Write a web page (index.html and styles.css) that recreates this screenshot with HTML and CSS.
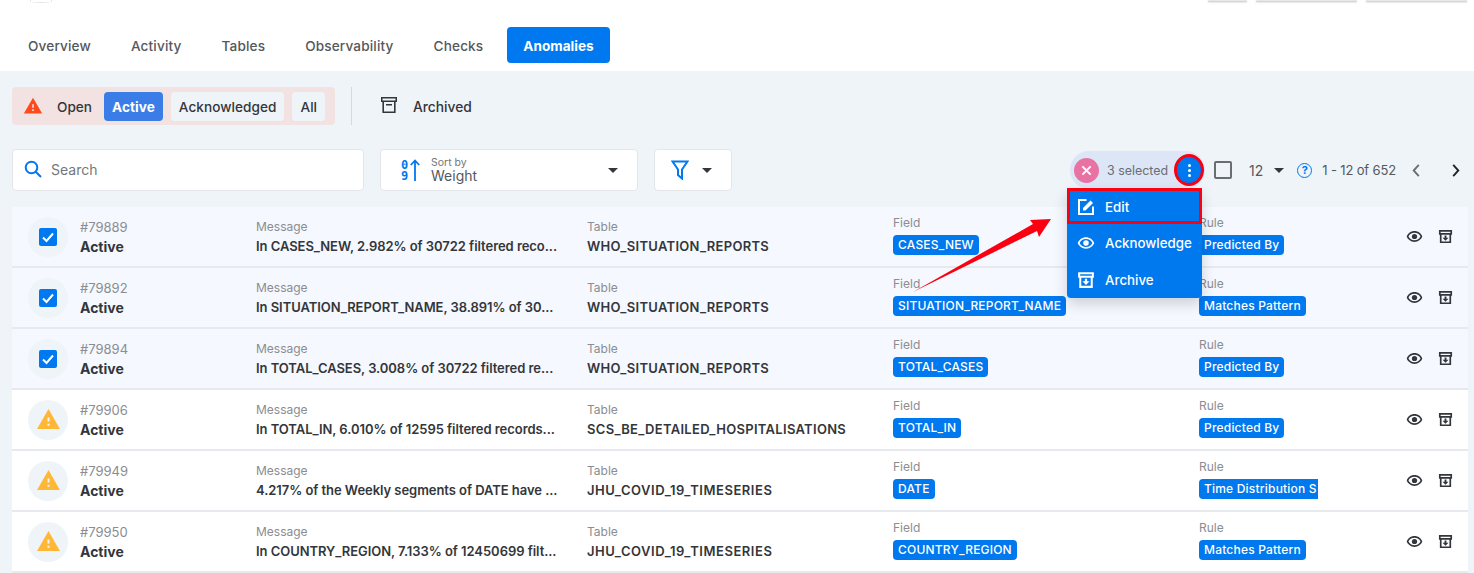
FILE: index.html
```html
<!DOCTYPE html>
<html lang="en">
<head>
  <meta charset="UTF-8" />
  <title>Anomalies</title>
  <link rel="stylesheet" href="styles.css">
</head>
<body>
  <svg class="defs" width="0" height="0">
    <symbol id="i-warn" viewBox="0 0 24 24"><path d="M1 21h22L12 2 1 21zm12-3h-2v-2h2v2zm0-4h-2v-4h2v4z"/></symbol>
    <symbol id="i-eye" viewBox="0 0 24 24"><path d="M12 6.8c3.79 0 7 1.900 8.500 5.200-1.500 3.300-4.700 5.200-8.500 5.200S5 15.300 3.500 12C5 8.700 8.210 6.800 12 6.800m0-2.400C7 4.400 2.730 7.550 1 12c1.730 4.450 6 7.600 11 7.600s9.270-3.150 11-7.600c-1.730-4.450-6-7.600-11-7.600z"/><circle cx="12" cy="12" r="3.700"/></symbol>
    <symbol id="i-unarchive" viewBox="0 0 16 16"><path fill-rule="evenodd" d="M1 1h14v5h-1V15H2V6H1zM2.800 2.800v1.400h10.400V2.800zM3.800 6v7.200h8.400V6z"/><path d="M7 6.800h2v2.400h2.200L8 12.400 4.800 9.200H7z"/></symbol>
  </svg>

  <header class="topbar">
    <div class="top-stubs">
      <span class="logo-stub"></span>
      <span class="stub stub-a"></span>
      <span class="stub stub-b"></span>
      <span class="stub stub-b"></span>
    </div>
    <nav class="tabs">
      <a class="tab">Overview</a>
      <a class="tab">Activity</a>
      <a class="tab">Tables</a>
      <a class="tab">Observability</a>
      <a class="tab">Checks</a>
      <a class="tab tab-on">Anomalies</a>
    </nav>
  </header>

  <main class="content">
    <div class="status-row">
      <div class="status-group">
        <svg class="status-warn"><use href="#i-warn"/></svg>
        <span class="status-label">Open</span>
        <span class="pill pill-on">Active</span>
        <span class="pill">Acknowledged</span>
        <span class="pill">All</span>
      </div>
      <span class="divider"></span>
      <svg class="archive-icon" viewBox="0 0 16 16"><path fill-rule="evenodd" d="M0 0h16v5h-1.400v11H1.400V5H0zM1.500 1.500V3.500h13V1.500zM3 5v9.500h10V5z"/><rect x="5" y="7" width="6" height="1.500"/></svg>
      <span class="archived">Archived</span>
    </div>

    <div class="tools-row">
      <label class="search">
        <svg class="search-icon" viewBox="0 0 18 18"><circle cx="7.500" cy="7.500" r="5.800"/><path d="M11.700 11.700 17 17"/></svg>
        <span>Search</span>
      </label>
      <div class="sort">
        <svg class="sort-icon" viewBox="0 0 18 24">
          <text x="0" y="10.500">0</text>
          <text x="0" y="22">9</text>
          <path d="M14 23V3M9.800 7 14 2.500 18.200 7"/>
        </svg>
        <div class="sort-text">
          <small>Sort by</small>
          <span>Weight</span>
        </div>
        <i class="caret"></i>
      </div>
      <div class="filter">
        <svg class="filter-icon" viewBox="0 0 18 20"><path d="M1.500 1.500h15L11 9.500v9l-4-3.500V9.500z"/></svg>
        <i class="caret"></i>
      </div>

      <div class="bulk">
        <div class="selected">
          <span class="clear">
            <svg viewBox="0 0 12 12"><path d="M1.500 1.500l9 9M10.500 1.500l-9 9"/></svg>
          </span>
          <span class="selected-text">3 selected</span>
          <span class="kebab"><b></b><b></b><b></b></span>
        </div>
        <ul class="menu">
          <li class="menu-item menu-edit">
            <svg viewBox="0 0 18 18"><path class="stroke" d="M9.500 2H2v14h14V8.500"/><path d="M6 12.500V10l7.500-7.500 2.500 2.500L8.500 12.500z"/></svg>
            Edit
          </li>
          <li class="menu-item">
            <svg viewBox="0 0 24 24"><use href="#i-eye"/></svg>
            Acknowledge
          </li>
          <li class="menu-item">
            <svg viewBox="0 0 16 16"><use href="#i-unarchive"/></svg>
            Archive
          </li>
        </ul>
        <span class="check-all"></span>
        <span class="per-page">12</span>
        <i class="caret"></i>
        <span class="help">?</span>
        <span class="range">1 - 12 of 652</span>
        <svg class="chev chev-prev" viewBox="0 0 8 14"><path d="M7 1 1.500 7 7 13"/></svg>
        <svg class="chev chev-next" viewBox="0 0 8 14"><path d="M1 1l5.500 6L1 13"/></svg>
      </div>
    </div>

    <section class="rows">
      <article class="row row-sel">
        <div class="state"><span class="tick"><svg viewBox="0 0 18 18"><path d="M4 9.500 7.500 13 14 5.500"/></svg></span></div>
        <div class="ident"><small>#79889</small><strong>Active</strong></div>
        <div class="cell"><small>Message</small><strong>In CASES_NEW, 2.982% of 30722 filtered reco...</strong></div>
        <div class="cell cell-table"><small>Table</small><strong>WHO_SITUATION_REPORTS</strong></div>
        <div class="cell cell-tag"><small>Field</small><span class="tag">CASES_NEW</span></div>
        <div class="cell cell-tag"><small>Rule</small><span class="tag">Predicted By</span></div>
        <div class="actions"><svg class="act-eye"><use href="#i-eye"/></svg><svg class="act-box"><use href="#i-unarchive"/></svg></div>
      </article>
      <article class="row row-sel">
        <div class="state"><span class="tick"><svg viewBox="0 0 18 18"><path d="M4 9.500 7.500 13 14 5.500"/></svg></span></div>
        <div class="ident"><small>#79892</small><strong>Active</strong></div>
        <div class="cell"><small>Message</small><strong>In SITUATION_REPORT_NAME, 38.891% of 30...</strong></div>
        <div class="cell cell-table"><small>Table</small><strong>WHO_SITUATION_REPORTS</strong></div>
        <div class="cell cell-tag"><small>Field</small><span class="tag">SITUATION_REPORT_NAME</span></div>
        <div class="cell cell-tag"><small>Rule</small><span class="tag">Matches Pattern</span></div>
        <div class="actions"><svg class="act-eye"><use href="#i-eye"/></svg><svg class="act-box"><use href="#i-unarchive"/></svg></div>
      </article>
      <article class="row row-sel">
        <div class="state"><span class="tick"><svg viewBox="0 0 18 18"><path d="M4 9.500 7.500 13 14 5.500"/></svg></span></div>
        <div class="ident"><small>#79894</small><strong>Active</strong></div>
        <div class="cell"><small>Message</small><strong>In TOTAL_CASES, 3.008% of 30722 filtered re...</strong></div>
        <div class="cell cell-table"><small>Table</small><strong>WHO_SITUATION_REPORTS</strong></div>
        <div class="cell cell-tag"><small>Field</small><span class="tag">TOTAL_CASES</span></div>
        <div class="cell cell-tag"><small>Rule</small><span class="tag">Predicted By</span></div>
        <div class="actions"><svg class="act-eye"><use href="#i-eye"/></svg><svg class="act-box"><use href="#i-unarchive"/></svg></div>
      </article>
      <article class="row">
        <div class="state"><svg class="warn"><use href="#i-warn"/></svg></div>
        <div class="ident"><small>#79906</small><strong>Active</strong></div>
        <div class="cell"><small>Message</small><strong>In TOTAL_IN, 6.010% of 12595 filtered records...</strong></div>
        <div class="cell cell-table"><small>Table</small><strong>SCS_BE_DETAILED_HOSPITALISATIONS</strong></div>
        <div class="cell cell-tag"><small>Field</small><span class="tag">TOTAL_IN</span></div>
        <div class="cell cell-tag"><small>Rule</small><span class="tag">Predicted By</span></div>
        <div class="actions"><svg class="act-eye"><use href="#i-eye"/></svg><svg class="act-box"><use href="#i-unarchive"/></svg></div>
      </article>
      <article class="row">
        <div class="state"><svg class="warn"><use href="#i-warn"/></svg></div>
        <div class="ident"><small>#79949</small><strong>Active</strong></div>
        <div class="cell"><small>Message</small><strong>4.217% of the Weekly segments of DATE have ...</strong></div>
        <div class="cell cell-table cell-jhu"><small>Table</small><strong>JHU_COVID_19_TIMESERIES</strong></div>
        <div class="cell cell-tag"><small>Field</small><span class="tag">DATE</span></div>
        <div class="cell cell-tag"><small>Rule</small><span class="tag tag-cut">Time Distribution S</span></div>
        <div class="actions"><svg class="act-eye"><use href="#i-eye"/></svg><svg class="act-box"><use href="#i-unarchive"/></svg></div>
      </article>
      <article class="row">
        <div class="state"><svg class="warn"><use href="#i-warn"/></svg></div>
        <div class="ident"><small>#79950</small><strong>Active</strong></div>
        <div class="cell"><small>Message</small><strong>In COUNTRY_REGION, 7.133% of 12450699 filt...</strong></div>
        <div class="cell cell-table cell-jhu"><small>Table</small><strong>JHU_COVID_19_TIMESERIES</strong></div>
        <div class="cell cell-tag"><small>Field</small><span class="tag">COUNTRY_REGION</span></div>
        <div class="cell cell-tag"><small>Rule</small><span class="tag">Matches Pattern</span></div>
        <div class="actions"><svg class="act-eye"><use href="#i-eye"/></svg><svg class="act-box"><use href="#i-unarchive"/></svg></div>
      </article>
    </section>
  </main>

  <svg class="callout" viewBox="0 0 1474 573"><polygon points="913,292 1033,224 1030,220 1051,219 1039,237 1037,231"/></svg>
</body>
</html>
```

FILE: styles.css
```css
* {
  box-sizing: border-box;
}
html, body {
  height: 573px;
  overflow: hidden;
}
body {
  font-family: 'Inter', 'Noto Sans', sans-serif;
  margin: 0;
  color: #33363a;
  background-color: #eff4f9;
  position: relative;
}
.defs {
  position: absolute;
}
small {
  font-size: 12px;
  font-weight: 400;
}

/* top bar */
.topbar {
  height: 71px;
  background-color: white;
  padding-left: 12px;
}
.top-stubs {
  height: 27px;
  display: flex;
  align-items: flex-start;
  padding-right: 7px;
  gap: 9px;
}
.logo-stub {
  width: 22px;
  height: 3px;
  margin-left: 18px;
  margin-right: auto;
  border: 1px solid #e3e5e8;
  border-top: none;
  border-radius: 0 0 50% 50%;
}
.stub {
  height: 1px;
  background-color: #e8e8e8;
  box-shadow: 0 1px 2px rgba(0,0,0,0.35);
}
.stub-a {
  width: 39px;
}
.stub-b {
  width: 101px;
}
.tabs {
  display: flex;
  gap: 8px;
}
.tab {
  height: 36px;
  padding: 1px 16px 0;
  display: flex;
  align-items: center;
  font-size: 13.600px;
  font-weight: 500;
  letter-spacing: 0.150px;
  color: #55585c;
  border-radius: 4px;
}
.tab-on {
  background-color: #0078f0;
  color: white;
  font-weight: 700;
  letter-spacing: 0;
}

/* main */
.content {
  padding: 16px 6px 0 12px;
}
.status-row {
  height: 38px;
  display: flex;
  align-items: center;
}
.status-group {
  height: 38px;
  width: 323px;
  display: flex;
  align-items: center;
  gap: 8px;
  padding-left: 11px;
  background-color: #f2e3e2;
  border-radius: 4px;
}
.status-warn {
  width: 20px;
  height: 20px;
  fill: #ff4a1c;
}
.status-label {
  margin-left: 6px;
  margin-right: 4px;
  padding-top: 1px;
  font-size: 13.600px;
  font-weight: 500;
}
.pill {
  height: 29px;
  padding: 1px 8px 0;
  display: flex;
  align-items: center;
  font-size: 13.600px;
  font-weight: 500;
  letter-spacing: 0.050px;
  background-color: #eff4f9;
  border-radius: 4px;
}
.pill-on {
  background-color: #3a7de6;
  color: white;
  font-weight: 700;
}
.divider {
  width: 1px;
  height: 38px;
  margin: 0 29px 0 16px;
  background-color: #d5d9de;
}
.archive-icon {
  width: 16px;
  height: 16px;
  margin-bottom: 3px;
  fill: #33363a;
}
.archived {
  margin-left: 16px;
  padding-top: 1px;
  font-size: 13.800px;
  font-weight: 500;
}

.tools-row {
  margin-top: 24px;
  height: 42px;
  display: flex;
  align-items: center;
}
.search, .sort, .filter {
  height: 42px;
  display: flex;
  align-items: center;
  background: white;
  border: 1px solid #e2e6ea;
  border-radius: 4px;
}
.search {
  width: 352px;
  padding-left: 11px;
  padding-bottom: 2px;
  font-size: 14px;
  color: #74777b;
}
.search-icon {
  width: 18px;
  height: 18px;
  margin-right: 9px;
  fill: none;
  stroke: #0078f0;
  stroke-width: 2;
}
.sort {
  width: 258px;
  margin-left: 16px;
  padding: 0 19px 0 20px;
}
.sort-icon {
  width: 18px;
  height: 24px;
  margin-right: 12px;
  overflow: visible;
}
.sort-icon text {
  font-family: 'DejaVu Sans Mono', monospace;
  font-size: 12px;
  font-weight: 700;
  fill: #0078f0;
}
.sort-icon path {
  fill: none;
  stroke: #0078f0;
  stroke-width: 1.800;
}
.sort-text {
  flex: 1;
  display: flex;
  flex-direction: column;
  line-height: 16px;
  font-size: 14px;
  color: #55585c;
}
.sort-text small {
  font-size: 10.500px;
  line-height: 11px;
  color: #74777b;
}
.caret {
  display: block;
  width: 0;
  height: 0;
  border-left: 5px solid transparent;
  border-right: 5px solid transparent;
  border-top: 5px solid #33363a;
}
.filter {
  width: 78px;
  margin-left: 16px;
  padding-left: 16px;
}
.filter-icon {
  width: 18px;
  height: 20px;
  margin-right: 13px;
  fill: none;
  stroke: #0078f0;
  stroke-width: 2;
}

/* bulk actions */
.bulk {
  margin-left: auto;
  display: flex;
  align-items: center;
  position: relative;
  height: 42px;
  padding-right: 8px;
}
.selected {
  width: 135px;
  height: 38px;
  display: flex;
  align-items: center;
  padding-left: 4px;
  background-color: #dce6f6;
  border-radius: 19px;
}
.clear {
  width: 25px;
  height: 25px;
  border-radius: 50%;
  background-color: #e873a3;
  display: flex;
  align-items: center;
  justify-content: center;
}
.clear svg {
  width: 11px;
  height: 11px;
  fill: none;
  stroke: white;
  stroke-width: 2.200;
}
.selected-text {
  margin-left: 8px;
  font-size: 12.400px;
  color: #6a6d72;
}
.kebab {
  width: 30px;
  height: 32px;
  margin-left: auto;
  margin-right: 1px;
  display: flex;
  flex-direction: column;
  align-items: center;
  justify-content: center;
  gap: 2px;
  background-color: #0078f0;
  border: 3px solid #fa0010;
  border-radius: 50%;
}
.kebab b {
  width: 3px;
  height: 3px;
  border-radius: 50%;
  background-color: white;
}
.menu {
  position: absolute;
  top: 39px;
  left: -3px;
  z-index: 5;
  width: 135px;
  margin: 0;
  padding: 0;
  list-style: none;
  background-color: #0078ee;
  border-radius: 0 0 4px 4px;
  box-shadow: 0 6px 14px rgba(0,0,0,0.16);
}
.menu-item {
  height: 37px;
  padding: 1px 0 0 10px;
  display: flex;
  align-items: center;
  gap: 10px;
  font-size: 13.300px;
  font-weight: 500;
  color: white;
}
.menu-item svg {
  width: 18px;
  height: 18px;
  fill: white;
}
.menu-item svg .stroke {
  fill: none;
  stroke: white;
  stroke-width: 2;
}
.menu-edit {
  height: 36px;
  border: 3px solid #fa0010;
  padding: 1px 0 0 7px;
}
.check-all {
  width: 18px;
  height: 18px;
  margin-left: 9px;
  border: 2px solid #6a6d72;
  border-radius: 2px;
}
.per-page {
  margin: 0 11px 0 17px;
  font-size: 14px;
  color: #55585c;
}
.help {
  width: 15px;
  height: 15px;
  margin-left: 13px;
  display: flex;
  align-items: center;
  justify-content: center;
  font-size: 11px;
  font-weight: 700;
  color: #0078f0;
  border: 1.500px solid #0078f0;
  border-radius: 50%;
}
.range {
  margin-left: 10px;
  font-size: 13px;
  letter-spacing: -0.150px;
  color: #55585c;
}
.chev {
  width: 8px;
  height: 13px;
  fill: none;
  stroke-width: 2;
}
.chev-prev {
  margin-left: 16px;
  stroke: #6a6d72;
}
.chev-next {
  margin-left: 32px;
  stroke: #222;
}

/* rows */
.rows {
  margin-top: 16px;
}
.row {
  height: 61px;
  display: grid;
  grid-template-columns: 68px 176px 331px 306px 306px 119px 1fr;
  align-items: center;
  background-color: white;
  border-bottom: 2px solid #e6e9ed;
}
.row-sel {
  background-color: #f5f8fe;
}
.state {
  width: 40px;
  height: 40px;
  margin-left: 16px;
  display: flex;
  align-items: center;
  justify-content: center;
  background-color: #eff4f9;
  border-radius: 50%;
}
.warn {
  width: 25px;
  height: 25px;
  fill: #ffb836;
}
.tick {
  width: 18px;
  height: 18px;
  background-color: #0078f0;
  border-radius: 2px;
  display: block;
}
.tick svg {
  display: block;
  fill: none;
  stroke: white;
  stroke-width: 2;
}
.ident, .cell {
  display: flex;
  flex-direction: column;
  align-items: flex-start;
  white-space: nowrap;
  min-width: 0;
}
.ident {
  padding-top: 2px;
}
.ident small {
  font-size: 13px;
}
.ident small, .cell small {
  color: #8a8d91;
  line-height: 16px;
}
.ident strong {
  margin-top: 3px;
  font-size: 14px;
  font-weight: 700;
  line-height: 18px;
  color: #33363a;
}
.cell strong {
  margin-top: 2px;
  font-size: 13px;
  font-weight: 600;
  letter-spacing: -0.050px;
  line-height: 18px;
  color: #33363a;
}
.cell-table strong {
  letter-spacing: 0.300px;
}
.cell-jhu strong {
  letter-spacing: 0.550px;
}
.cell-tag {
  overflow: hidden;
  padding-bottom: 3px;
}
.tag {
  margin-top: 4px;
  height: 20px;
  padding: 0 5px;
  display: block;
  font-size: 12px;
  font-weight: 500;
  letter-spacing: 0.200px;
  line-height: 20px;
  color: white;
  background-color: #0078ee;
  border-radius: 4px;
}
.tag-cut {
  border-radius: 4px 0 0 4px;
}
.actions {
  display: flex;
  align-items: center;
  gap: 15px;
  padding-left: 88px;
}
.act-eye {
  width: 17px;
  height: 17px;
  fill: #33363a;
}
.act-box {
  width: 15px;
  height: 15px;
  fill: #33363a;
}

/* annotation */
.callout {
  position: absolute;
  left: 0;
  top: 0;
  width: 1474px;
  height: 573px;
  z-index: 6;
  fill: #fa0010;
  pointer-events: none;
}
```
